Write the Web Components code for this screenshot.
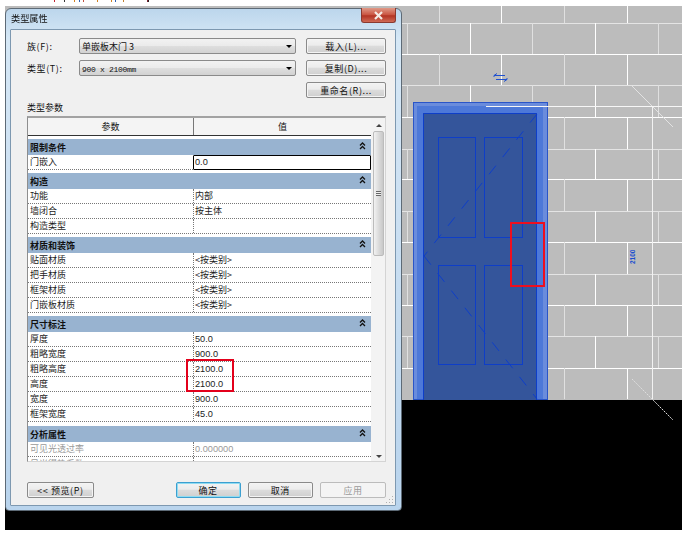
<!DOCTYPE html>
<html lang="zh">
<head>
<meta charset="utf-8">
<title>类型属性</title>
<style>
  html, body { margin: 0; height: 100%; background: #fff; overflow: hidden; }
  body { position: relative; font: 9px "Noto Sans CJK SC", "Liberation Sans", sans-serif; color: #111; }
</style>
</head>
<body>
<cut-caption></cut-caption>
<cad-view></cad-view>
<type-dialog heading="类型属性">
  <prop-group label="限制条件">
    <prop-row name="门嵌入" value="0.0" focused></prop-row>
  </prop-group>
  <prop-group label="构造">
    <prop-row name="功能" value="内部"></prop-row>
    <prop-row name="墙闭合" value="按主体"></prop-row>
    <prop-row name="构造类型" value=""></prop-row>
  </prop-group>
  <prop-group label="材质和装饰">
    <prop-row name="贴面材质" value="<按类别>"></prop-row>
    <prop-row name="把手材质" value="<按类别>"></prop-row>
    <prop-row name="框架材质" value="<按类别>"></prop-row>
    <prop-row name="门嵌板材质" value="<按类别>"></prop-row>
  </prop-group>
  <prop-group label="尺寸标注">
    <prop-row name="厚度" value="50.0"></prop-row>
    <prop-row name="粗略宽度" value="900.0"></prop-row>
    <prop-row name="粗略高度" value="2100.0"></prop-row>
    <prop-row name="高度" value="2100.0"></prop-row>
    <prop-row name="宽度" value="900.0"></prop-row>
    <prop-row name="框架宽度" value="45.0"></prop-row>
  </prop-group>
  <prop-group label="分析属性" style="margin-top:4px">
    <prop-row name="可见光透过率" value="0.000000" muted></prop-row>
    <prop-row name="日光得热系数" value="0.000000" muted></prop-row>
  </prop-group>
</type-dialog>
<mark-box></mark-box>

<script>
// the bottom of a cropped line of text, only its last pixels are left
class CutCaption extends HTMLElement {
  constructor() {
    super();
    this.attachShadow({ mode: "open" });
    const ticks = [[54, "#c02030"], [64, "#333"], [74, "#d08020"], [79, "#3060b0"], [83, "#c05040"],
      [97, "#d08020"], [111, "#d08020"], [115, "#3060b0"], [123, "#c08030"], [147, "#802030"], [148, "#222"]];
    this.shadowRoot.innerHTML = `
      <style>
        :host { display: block; height: 2px; }
        svg { display: block; }
      </style>
      <svg width="690" height="2">
        ${ticks.map(([x, c]) => `<rect x="${x}" y="0" width="1" height="2" fill="${c}"/>`).join("")}
      </svg>
    `;
  }
}

class CadView extends HTMLElement {
  constructor() {
    super();
    this.attachShadow({ mode: "open" });

    // brick joints, rows alternate between two sets of x positions
    const ys = [6, 23, 54, 85, 117, 149, 179, 211, 242, 274, 305, 336, 368, 399];
    let joints = "";
    ys.slice(1, -1).forEach((y, i) => {
      const c = i % 2 ? "#fff" : "#e4e4e4";
      joints += `<path d="M400 ${y + 0.5}H682" stroke="${c}"/>`;
    });
    ys.slice(0, -1).forEach((y, i) => {
      const xs = i % 2 ? [407, 470, 532, 595, 658] : [439, 501, 564, 627];
      xs.forEach((x, j) => {
        const c = j % 2 ? "#fff" : "#e0e0e0";
        joints += `<path d="M${x + 0.5} ${y}V${ys[i + 1]}" stroke="${c}"/>`;
      });
    });

    this.shadowRoot.innerHTML = `
      <style>
        :host { position: absolute; left: 5px; top: 6px; width: 677px; height: 524px; display: block; }
        svg { display: block; }
        text { font: 700 6.5px "Liberation Sans", sans-serif; fill: #1a4fd0; }
      </style>
      <svg width="677" height="524" viewBox="5 6 677 524">
        <rect x="5" y="6" width="677" height="394" fill="#bcbcbc"/>
        <rect x="5" y="400" width="677" height="130" fill="#000"/>
        ${joints}
        <path d="M652.5 106V399" stroke="#f2f2f2"/>
        <path d="M632 86L673 127" stroke="#e2e2e2"/>
        <path d="M632 379L673 420" stroke="#ddd" stroke-dasharray="2 1"/>
        <path d="M494 75.5H505M494 75.5L497 73.5M494 75.5V77M507 79.5H496M507 79.5L504 81.5M507 79.5V78" fill="none" stroke="#1f50d0"/>
        <text transform="translate(635 264) rotate(-90)">2100</text>

        <rect x="413" y="102" width="135" height="298" fill="#6a8cdc"/>
        <rect x="417" y="106" width="126" height="294" fill="#4d78d8"/>
        <rect x="413.5" y="102.5" width="134" height="297" fill="none" stroke="#2a55c8"/>
        <rect x="423" y="113" width="114" height="287" fill="#34559b"/>
        <path d="M423.5 400V113.5H536.5V400" fill="none" stroke="#0e3ec8"/>
        <g fill="none" stroke="#0e3ec8">
          <rect x="438.5" y="137.5" width="37" height="100"/>
          <rect x="484.5" y="137.5" width="38" height="100"/>
          <rect x="438.5" y="265.5" width="37" height="99"/>
          <rect x="484.5" y="265.5" width="38" height="99"/>
          <path d="M537 114L424 256" stroke-dasharray="11 11"/>
          <path d="M424 256L537 399" stroke-dasharray="11 11"/>
        </g>
        <path d="M486 106.5H682" stroke="#f6f6f6"/>
        <rect x="511" y="223" width="33" height="63" fill="none" stroke="#ee0f1f" stroke-width="2"/>
      </svg>
    `;
  }
}

class WinButton extends HTMLElement {
  constructor() {
    super();
    this.attachShadow({ mode: "open" });
    this.shadowRoot.innerHTML = `
      <style>
        :host {
          display: flex; align-items: center; justify-content: center;
          box-sizing: border-box; height: 16px;
          border: 1px solid #8a8a8a; border-radius: 2px;
          background: linear-gradient(#f3f3f3 0, #ececec 45%, #dcdcdc 50%, #cfcfcf 100%);
          font-size: 9px; letter-spacing: .6px; color: #111; white-space: nowrap;
          box-shadow: inset 0 0 0 1px #f4f4f4;
        }
        :host([primary]) { border-color: #3c9fd0; box-shadow: inset 0 0 0 1px #8fdcf2; }
        :host([disabled]) { border-color: #bcbcbc; background: #f4f4f4; color: #9a9a9a; box-shadow: none; }
      </style>
      <slot></slot>
    `;
  }
}

class ComboBox extends HTMLElement {
  constructor() {
    super();
    this.attachShadow({ mode: "open" });
    this.shadowRoot.innerHTML = `
      <style>
        :host {
          display: flex; align-items: center; justify-content: space-between;
          box-sizing: border-box; height: 16px; padding: 0 3px 0 2px;
          border: 1px solid #8a8a8a; border-radius: 2px;
          background: linear-gradient(#f2f2f2 0, #ebebeb 48%, #dedede 52%, #d2d2d2 100%);
          font-size: 9px; color: #111;
        }
        .arrow { width: 0; height: 0; border: 3px solid transparent; border-top: 3px solid #000; border-bottom: 0; }
      </style>
      <span><slot></slot></span>
      <span class="arrow"></span>
    `;
  }
}

class PropRow extends HTMLElement {
  constructor() {
    super();
    this.attachShadow({ mode: "open" });
    const value = (this.getAttribute("value") || "").replace(/</g, "&lt;").replace(/>/g, "&gt;");
    this.shadowRoot.innerHTML = `
      <style>
        :host {
          display: grid; grid-template-columns: 165px 178px; height: 15px;
          box-sizing: border-box; border-bottom: 1px dotted #777;
          background: #fff; font-size: 9px; line-height: 14px; color: #1c1c1c;
        }
        :host([muted]) { color: #9a9a9a; }
        .name { padding-left: 2px; overflow: hidden; white-space: nowrap; }
        .value {
          padding-left: 1px; border-left: 1px dotted #777;
          font-family: "Liberation Sans", "Noto Sans CJK SC", sans-serif; font-size: 9.2px;
          overflow: hidden; white-space: nowrap;
        }
        .cjk { font-family: "Noto Sans CJK SC", sans-serif; font-size: 9px; }
        :host([focused]) .value { border: 1px solid #000; border-radius: 1px; line-height: 13px; height: 13px; background: #fff; }
      </style>
      <div class="name">${this.getAttribute("name")}</div>
      <div class="value ${/[^\x00-\x7f]/.test(value) ? "cjk" : ""}">${value}</div>
    `;
  }
}

class PropGroup extends HTMLElement {
  constructor() {
    super();
    this.attachShadow({ mode: "open" });
    this.shadowRoot.innerHTML = `
      <style>
        :host { display: block; margin-top: 3px; }
        .head {
          display: flex; align-items: center; justify-content: space-between;
          height: 16px; padding: 0 5px 0 2px; background: #98b3d0;
          font-size: 9px; font-weight: 700; color: #111;
        }
        svg { display: block; margin-top: -3px; }
      </style>
      <div class="head">
        <span>${this.getAttribute("label")}</span>
        <svg width="7" height="8" viewBox="0 0 7 8" fill="none" stroke="#111" stroke-width="1.3"><path d="M1 3.5L3.5 1L6 3.5M1 7L3.5 4.5L6 7"/></svg>
      </div>
      <slot></slot>
    `;
  }
}

class TypeDialog extends HTMLElement {
  constructor() {
    super();
    this.attachShadow({ mode: "open" });
    this.shadowRoot.innerHTML = `
      <style>
        :host {
          position: absolute; left: 5px; top: 8px; width: 397px; height: 503px;
          box-sizing: border-box; display: flex; flex-direction: column;
          padding: 0 5px 4px 4px;
          border: 1px solid #5d6a76; border-radius: 6px 6px 4px 4px;
          background: linear-gradient(#bcd6ec 0, #d6e8f6 6%, #cfe2f3 30%, #b9d4ed 100%);
          font-size: 9px; color: #111;
          filter: blur(.3px);
        }
        .titlebar { height: 20px; flex: none; line-height: 19px; padding-left: 1px; font-size: 9.2px; }
        .close {
          position: absolute; right: 5px; top: -1px; width: 35px; height: 15px;
          border: 1px solid #8a3a30; border-top: 0; border-radius: 0 0 3px 3px;
          box-sizing: border-box; display: flex; align-items: center; justify-content: center;
          background: linear-gradient(#e09a88 0, #c9533f 50%, #b23423 55%, #d06a55 100%);
        }
        .client {
          flex: 1; display: flex; flex-direction: column; min-height: 0;
          padding: 8px 9px 0 16px;
          border: 1px solid #7d98b0; border-radius: 1px;
          background: #f0f0f0; position: relative;
        }
        .form {
          display: grid; grid-template-columns: 42px 217px 80px; column-gap: 10px;
          grid-auto-rows: 16px; row-gap: 6px; align-items: center;
        }
        .form .label { margin-right: -10px; letter-spacing: .6px; white-space: nowrap; }
        .form .wide { grid-column: 3; }
        .caption { height: 18px; line-height: 19px; flex: none; }
        .table {
          display: grid; grid-template-columns: 343px 14px; height: 346px; width: 359px;
          box-sizing: border-box; flex: none; overflow: hidden; background: #fff;
          border: 1px solid #d4d4d4; border-top: 2px solid #a2a2a2; border-left: 1px solid #8e8e8e;
        }
        .main { min-width: 0; overflow: hidden; }
        .cols {
          display: grid; grid-template-columns: 165px 178px; height: 18px; box-sizing: border-box;
          border-bottom: 1px solid #333; background: #f4f4f4; text-align: center; line-height: 17px;
        }
        .cols div + div { border-left: 1px solid #777; }
        .track { display: flex; flex-direction: column; align-items: center; background: #f3f3f3; padding-left: 1px; }
        .up, .down { width: 0; height: 0; border: 3px solid transparent; }
        .up { border-top: 0; border-bottom: 3px solid #444; margin: 6px 0 4px; }
        .down { border-bottom: 0; border-top: 3px solid #444; margin-top: auto; margin-bottom: 3px; }
        .thumb {
          box-sizing: border-box; width: 11px; height: 125px; border: 1px solid #bcbcbc; border-radius: 2px;
          background: linear-gradient(90deg, #f2f2f2, #dcdcdc 50%, #c8c8c8);
          display: flex; align-items: center; justify-content: center;
        }
        .grip { width: 5px; height: 5px; background: repeating-linear-gradient(#666 0 1px, #eee 1px 2px); }
        .footer { display: flex; gap: 7px; margin-top: 20px; }
        .footer win-button { width: 66px; }
        .footer .preview { margin-right: 75px; width: 67px; }
        .resize { position: absolute; right: 1px; bottom: 1px; }
      </style>
      <div class="titlebar">${this.getAttribute("heading")}</div>
      <div class="close">
        <svg width="11" height="9" viewBox="0 0 11 9"><path d="M2 1L9 8M9 1L2 8" stroke="#f4ece6" stroke-width="2.2"/></svg>
      </div>
      <div class="client">
        <div class="form">
          <div class="label">族(F):</div>
          <combo-box>单嵌板木门 3</combo-box>
          <win-button>载入(L)...</win-button>
          <div class="label">类型(T):</div>
          <combo-box><span style="font:8px 'Liberation Mono',monospace;letter-spacing:-.3px">900 x 2100mm</span></combo-box>
          <win-button>复制(D)...</win-button>
          <win-button class="wide">重命名(R)...</win-button>
        </div>
        <div class="caption">类型参数</div>
        <div class="table">
          <div class="main">
            <div class="cols"><div>参数</div><div>值</div></div>
            <slot></slot>
          </div>
          <div class="track">
            <div class="up"></div>
            <div class="thumb"><div class="grip"></div></div>
            <div class="down"></div>
          </div>
        </div>
        <div class="footer">
          <win-button class="preview">&lt;&lt; 预览(P)</win-button>
          <win-button primary style="width:65px">确定</win-button>
          <win-button>取消</win-button>
          <win-button disabled>应用</win-button>
        </div>
        <svg class="resize" width="8" height="8" viewBox="0 0 8 8" fill="#b0b0b0"><path d="M6 0h1v1H6zM3 3h1v1H3zM6 3h1v1H6zM0 6h1v1H0zM3 6h1v1H3zM6 6h1v1H6z"/></svg>
      </div>
    `;
  }
}

class MarkBox extends HTMLElement {
  constructor() {
    super();
    this.attachShadow({ mode: "open" });
    this.shadowRoot.innerHTML = `
      <style>
        :host { position: absolute; left: 186px; top: 359px; width: 48px; height: 33px; box-sizing: border-box; border: 2px solid #e3001b; display: block; }
      </style>
    `;
  }
}

customElements.define("cut-caption", CutCaption);
customElements.define("cad-view", CadView);
customElements.define("win-button", WinButton);
customElements.define("combo-box", ComboBox);
customElements.define("prop-row", PropRow);
customElements.define("prop-group", PropGroup);
customElements.define("type-dialog", TypeDialog);
customElements.define("mark-box", MarkBox);
</script>
</body>
</html>
